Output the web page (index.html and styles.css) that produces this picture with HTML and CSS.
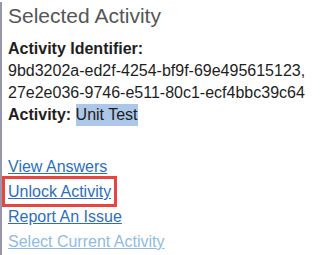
FILE: index.html
```html
<!DOCTYPE html>
<html>
<head>
<meta charset="utf-8">
<link rel="stylesheet" href="styles.css">
</head>
<body>
<div class="panel">
  <h2 class="title">Selected Activity</h2>
  <div class="details">
    <div class="label">Activity Identifier:</div>
    <div class="ids">9bd3202a-ed2f-4254-bf9f-69e495615123,</div>
    <div class="ids">27e2e036-9746-e511-80c1-ecf4bbc39c64</div>
    <div><span class="label">Activity:</span> <span class="hl">Unit Test</span></div>
  </div>
  <div class="links">
    <a class="link" href="#">View Answers</a>
    <a class="link boxed" href="#">Unlock Activity</a>
    <a class="link" href="#">Report An Issue</a>
    <a class="link disabled" href="#">Select Current Activity</a>
  </div>
</div>
</body>
</html>
```
FILE: styles.css
```css
html, body {
  margin: 0;
  padding: 0;
  background: #ffffff;
}
body {
  font-family: "Liberation Sans", Arial, sans-serif;
  width: 312px;
  height: 255px;
  overflow: hidden;
}
.panel {
  border-left: 2px solid #9a98a8;
  padding-left: 6px;
  height: 255px;
  box-sizing: border-box;
}
.title {
  margin: 2px 0 0 0;
  font-size: 21px;
  font-weight: normal;
  line-height: 28px;
  color: #565656;
}
.details {
  margin-top: 8px;
  font-size: 16px;
  line-height: 22px;
  color: #1e1e1e;
}
.label {
  font-weight: bold;
}
.ids {
  white-space: nowrap;
}
.hl {
  background: #acc7e7;
  padding: 2px 0 3px;
}
.links {
  margin-top: 28px;
  display: flex;
  flex-direction: column;
  align-items: flex-start;
  font-size: 16px;
  line-height: 25px;
}
.link {
  color: #2b6fbd;
  text-decoration: underline;
}
.boxed {
  outline: 3px solid #e8453c;
  outline-offset: 0;
  padding: 0 3px;
  margin-left: -3px;
}
.disabled {
  color: #8fbbe6;
}
```
